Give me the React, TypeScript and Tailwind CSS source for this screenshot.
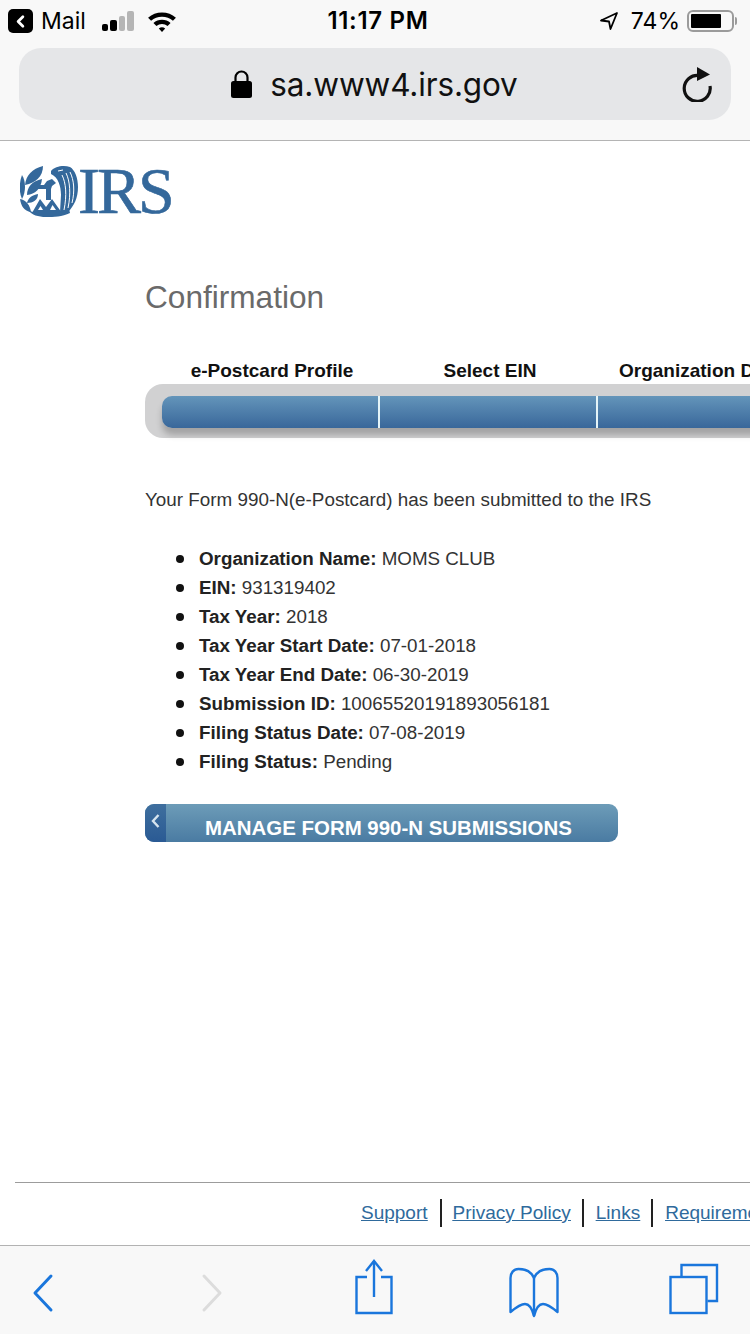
import { ChevronLeft } from 'lucide-react';

const sans = { fontFamily: '"Liberation Sans", Arial, sans-serif' };

const details = [
    ['Organization Name:', 'MOMS CLUB'],
    ['EIN:', '931319402'],
    ['Tax Year:', '2018'],
    ['Tax Year Start Date:', '07-01-2018'],
    ['Tax Year End Date:', '06-30-2019'],
    ['Submission ID:', '10065520191893056181'],
    ['Filing Status Date:', '07-08-2019'],
    ['Filing Status:', 'Pending'],
];

function StatusBar() {
    return (
        <div className="h-[40px] pt-[2px] flex items-center justify-between pl-[8px] pr-[13px] text-[23px] text-black font-['Inter',sans-serif]">
            <div className="flex items-center w-[300px]">
                <div className="w-[25px] h-[24px] bg-black rounded-[5px] flex items-center justify-center">
                    <ChevronLeft size={19} strokeWidth={3.5} className="text-white" />
                </div>
                <span className="ml-[8px] leading-none">Mail</span>
                {/* signal */}
                <div className="ml-[16px] flex items-end gap-[2px]">
                    <span className="w-[6.5px] h-[7px] rounded-[2px] bg-black" />
                    <span className="w-[6.5px] h-[11px] rounded-[2px] bg-black" />
                    <span className="w-[6.5px] h-[15px] rounded-[2px] bg-[#b5b5b5]" />
                    <span className="w-[6.5px] h-[20px] rounded-[2px] bg-[#b5b5b5]" />
                </div>
                <svg width="30" height="23" viewBox="0 0 28 22" preserveAspectRatio="none" className="ml-[13px]">
                    <path d="M1 7.5 A19 19 0 0 1 27 7.5 L24.2 10.4 A15 15 0 0 0 3.8 10.4 Z" fill="#000" />
                    <path d="M6 12.5 A12 12 0 0 1 22 12.5 L19.2 15.4 A8 8 0 0 0 8.8 15.4 Z" fill="#000" />
                    <path d="M11 17.6 A5 5 0 0 1 17 17.6 L14 21 Z" fill="#000" />
                </svg>
            </div>
            <span className="font-semibold text-[24px] tracking-[0.7px] leading-none ml-[11px]">11:17 PM</span>
            <div className="flex items-center justify-end w-[300px]">
                <svg width="20" height="20" viewBox="0 0 20 20" fill="none" stroke="#000" strokeWidth="1.8" strokeLinejoin="round">
                    <path d="M18 2 L2 9.5 L10 10.5 L11.5 18 Z" />
                </svg>
                <span className="ml-[12px] leading-none">74%</span>
                <div className="ml-[7px] w-[47px] h-[22px] rounded-[6px] border-2 border-[#9b9b9b] p-[2px]">
                    <div className="w-[30px] h-full bg-black rounded-[1px]" />
                </div>
                <div className="ml-[1px] w-[2px] h-[8px] bg-[#9b9b9b] rounded-r-[2px]" />
            </div>
        </div>
    );
}

function UrlBar() {
    return (
        <div className="mt-[8px] mx-[19px] h-[72px] rounded-[22px] bg-[#e5e6e8] flex items-center relative">
            <div className="flex-1 flex items-center justify-center -ml-[1px]">
                <svg width="21" height="28" viewBox="0 0 21 28">
                    <path d="M4.5 12 V7.5 A6 6 0 0 1 16.5 7.5 V12" fill="none" stroke="#000" strokeWidth="2.2" />
                    <rect x="0" y="11" width="21" height="17" rx="2.5" fill="#000" />
                </svg>
                <span className="ml-[18px] pt-[2px] text-[31.5px] leading-none text-[#111] font-['Inter',sans-serif] tracking-[-0.15px]">sa.www4.irs.gov</span>
            </div>
            {/* reload */}
            <svg width="32" height="36" viewBox="0 0 32 36" fill="none" className="absolute right-[18px] top-[18px]">
                <path d="M18 9.5 A13 13 0 1 0 29 20" stroke="#111" strokeWidth="3.2" />
                <path d="M16 1 L29 8.5 L16 15 Z" fill="#111" />
            </svg>
        </div>
    );
}

function Emblem() {
    return (
        <svg width="58" height="52" viewBox="0 0 58 52" fill="#34689b">
            {/* laurel */}
            <path d="M5 20 C6 10 12 4 23 1 C23 11 16 18 5 20 Z" />
            <path d="M7 30 C7 22 12 16 22 14 C21 24 15 29 7 30 Z" />
            <path d="M7 38 C8 33 12 30 18 29 C18 35 13 38 7 38 Z" />
            <path d="M2 10 C6 16 6 27 2 34 C-1 27 -1 18 2 10 Z" />
            <path d="M0 34 C6 35 10 40 11 47 C4 46 1 41 0 34 Z" />
            <path d="M8 45 C14 49 24 48 30 48 C38 48 44 47 49 44 L50 48 C42 52 34 52 26 52 C18 52 12 50 8 45 Z" />
            {/* small eagle and column */}
            <path d="M16 20 L24 20 L27 16 L32 14 L36 18 L32 21 L31 24 L31 35 L26 35 L26 24 L16 24 Z" />
            {/* scales */}
            <path d="M12 48 L20 34 L26 42 L32 34 L42 48 Z M18 45 L23 45 L20.5 41 Z M30 45 L36 45 L32.5 40 Z" fillRule="evenodd" />
            {/* eagle body and wing feathers */}
            <path d="M31 6 C35 1 44 0 50 2 C55 5 58 13 58 22 C58 33 54 41 48 47 L40 47 L41 30 C41 21 38 12 31 9 Z" />
            <g stroke="#fff" strokeWidth="1" fill="none">
                <path d="M42 10 C46 18 47 30 44 45" />
                <path d="M46 8 C50 16 51 29 48 43" />
                <path d="M50 7 C54 15 55 26 52 38" />
                <path d="M38 6 L43 5" />
            </g>
        </svg>
    );
}

function Toolbar() {
    return (
        <div className="h-[89px] shrink-0 border-t border-[#b2b2b2] bg-[#f8f8f8] pt-[12px] flex items-start">
            <svg width="24" height="60" viewBox="0 0 24 60" fill="none" stroke="#1a76dc" strokeWidth="3" strokeLinecap="round" strokeLinejoin="round" className="ml-[31px]">
                <path d="M20 18 L4 35 L20 52" />
            </svg>
            <svg width="24" height="60" viewBox="0 0 24 60" fill="none" stroke="#dcdcdc" strokeWidth="3" strokeLinecap="round" strokeLinejoin="round" className="ml-[145px]">
                <path d="M4 18 L20 35 L4 52" />
            </svg>
            <svg width="38" height="60" viewBox="0 0 38 60" fill="none" stroke="#1a76dc" strokeWidth="2.4" className="ml-[131px]">
                <path d="M12 19 H1.5 V55 H36.5 V19 H26" />
                <path d="M19 3 V39" />
                <path d="M11 13 L19 3 L27 13" />
            </svg>
            <svg width="50" height="60" viewBox="0 0 50 60" fill="none" stroke="#1a76dc" strokeWidth="2.4" className="ml-[116px]">
                <path d="M25 20 C22 13 15 11 9.5 11 C4.5 11 1.5 15 1.5 20 V54 C7.5 49 12 46 16 46 C20 46 23 50 25 58 C27 50 30 46 34 46 C38 46 42.5 49 48.5 54 V20 C48.5 15 45.5 11 40.5 11 C35 11 28 13 25 20 Z" strokeLinejoin="round" />
                <path d="M25 20 V58" />
            </svg>
            <svg width="50" height="60" viewBox="0 0 50 60" fill="none" stroke="#1a76dc" strokeWidth="2.4" className="ml-[110px]">
                <rect x="1.5" y="19" width="36" height="36" />
                <path d="M12.5 18 V7 H48 V43 H38.5" />
            </svg>
        </div>
    );
}

export default function App() {
    return (
        <div className="w-[750px] h-[1334px] bg-white flex flex-col overflow-hidden" style={sans}>
            {/* Safari chrome */}
            <div className="h-[141px] shrink-0 bg-[#f8f8f8] border-b border-[#b4b4b4]">
                <StatusBar />
                <UrlBar />
            </div>

            <div className="flex-1 min-h-0 flex flex-col">
                <div className="mt-[24px] ml-[20px] h-[52px] flex items-center">
                    <Emblem />
                    <span className="text-[66px] leading-none text-[#34689b] font-['Liberation_Serif',serif] tracking-[-3px] [-webkit-text-stroke:0.6px_#34689b]">IRS</span>
                </div>

                <div className="ml-[145px] mt-[61px] text-[31.6px] leading-[38px] text-[#6a6a6a]">Confirmation</div>

                {/* steps */}
                <div className="mt-[43px] pl-[163px] flex text-[19px] font-bold leading-[24px] text-[#111] whitespace-nowrap">
                    <div className="w-[218px] shrink-0 flex justify-center">e-Postcard Profile</div>
                    <div className="w-[218px] shrink-0 flex justify-center">Select EIN</div>
                    <div className="w-[218px] shrink-0 pl-[20px]">Organization Details</div>
                </div>
                <div className="ml-[145px] mt-[1px] h-[54px] w-[640px] shrink-0 bg-[#d1d1d2] rounded-l-[18px] pl-[17px] pt-[12px]">
                    <div className="h-[32px] flex rounded-l-[10px] overflow-hidden bg-gradient-to-b from-[#6495ba] to-[#39679a] shadow-[0_7px_6px_rgba(0,0,0,0.22)]">
                        <div className="w-[216px] shrink-0" />
                        <div className="w-[2px] shrink-0 bg-[#e4f4f8]" />
                        <div className="w-[216px] shrink-0" />
                        <div className="w-[2px] shrink-0 bg-[#e4f4f8]" />
                    </div>
                </div>

                <p className="ml-[145px] mt-[50px] text-[18.85px] leading-[24px] text-[#333]">Your Form 990-N(e-Postcard) has been submitted to the IRS</p>

                <ul className="ml-[176px] mt-[32px] text-[18.8px] leading-[29px] text-[#333]">
                    {details.map(([label, value]) => (
                        <li key={label} className="flex items-center whitespace-nowrap">
                            <span className="w-[8px] h-[8px] rounded-full bg-[#111] mr-[15px]" />
                            <span>
                                <b className="text-[#222]">{label}</b> {value}
                            </span>
                        </li>
                    ))}
                </ul>

                <div className="ml-[145px] mt-[28px] w-[473px] h-[38px] flex rounded-[9px] overflow-hidden bg-gradient-to-b from-[#6d9cb8] to-[#4a7ba2]">
                    <div className="w-[21px] shrink-0 bg-gradient-to-b from-[#3f6f9e] to-[#2a5a94] flex justify-center pt-[10px]">
                        <svg width="9" height="14" viewBox="0 0 9 14" fill="none" stroke="#d6e4ee" strokeWidth="2.4">
                            <path d="M7.5 1 L2 7 L7.5 13" />
                        </svg>
                    </div>
                    <div className="pl-[39px] text-[20.45px] font-bold leading-[47px] text-white whitespace-nowrap">MANAGE FORM 990-N SUBMISSIONS</div>
                </div>

                {/* footer */}
                <div className="mt-auto ml-[15px] h-[63px] border-t border-[#9c9c9c] pb-[2px] pl-[346px] flex items-center text-[19px] text-[#2f6a9c] whitespace-nowrap underline">
                    <a className="pr-[12px] border-r-2 border-[#222] h-[28px] leading-[28px]">Support</a>
                    <a className="px-[11px] border-r-2 border-[#222] h-[28px] leading-[28px]">Privacy Policy</a>
                    <a className="pl-[12px] pr-[11px] border-r-2 border-[#222] h-[28px] leading-[28px]">Links</a>
                    <a className="pl-[12px] h-[28px] leading-[28px]">Requirements</a>
                </div>
            </div>

            <Toolbar />
        </div>
    );
}
